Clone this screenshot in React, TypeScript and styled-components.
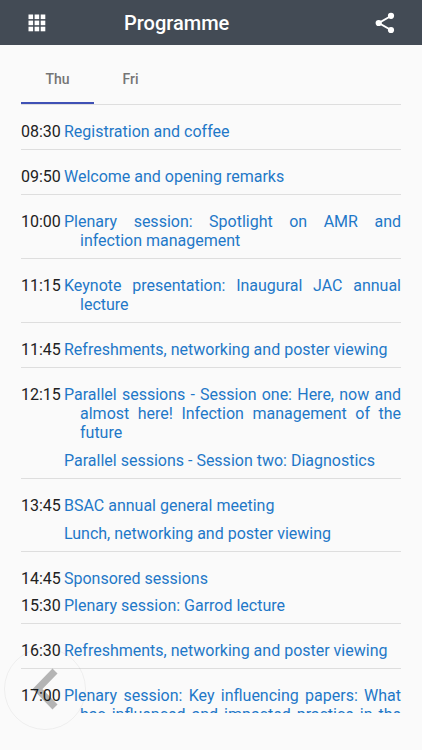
import React, { useState } from "react";
import styled, { createGlobalStyle } from "styled-components";

const GlobalStyle = createGlobalStyle`
  * { box-sizing: border-box; }
  body {
    margin: 0;
    background: #fafafa;
    color: #212121;
    font-family: Roboto, "Noto Sans", sans-serif;
    font-size: 16px;
    line-height: 19px;
  }
`;

const Screen = styled.div`
  display: flex;
  flex-direction: column;
  height: 100vh;
  padding-bottom: 37px;
`;

const AppBar = styled.header`
  display: flex;
  align-items: center;
  flex: none;
  height: 45px;
  padding: 0 25px;
  background: #434b55;
  color: #fff;
`;

const IconButton = styled.button`
  display: flex;
  padding: 0;
  border: 0;
  background: none;
  color: inherit;
  cursor: pointer;
`;

const Title = styled.h1`
  flex: 1;
  margin: 0;
  padding-left: 75px;
  font-size: 20px;
  font-weight: 500;
  line-height: 24px;
`;

const Tabs = styled.div`
  display: flex;
  flex: none;
  height: 60px;
  margin: 0 21px;
  padding-top: 11px;
  border-bottom: 1px solid #dedede;
`;

const Tab = styled.button<{ $active: boolean }>`
  width: 73px;
  padding: 0;
  border: 0;
  border-bottom: 2px solid ${(p) => (p.$active ? "#3f51b5" : "transparent")};
  background: none;
  color: #757575;
  font: 500 14px/20px Roboto, "Noto Sans", sans-serif;
  cursor: pointer;
`;

const Agenda = styled.main`
  flex: 1;
  min-height: 0;
  overflow: hidden;
  padding: 0 21px;
`;

const Block = styled.section`
  display: grid;
  row-gap: 8px;
  padding: 17px 0 8px;
  border-bottom: 1px solid #dedede;
`;

const Slot = styled.div`
  display: grid;
  grid-template-columns: 43px 1fr;
`;

const Sessions = styled.div`
  display: grid;
  row-gap: 9px;
`;

const SessionLink = styled.a`
  padding-left: 16px;
  color: #1f78c8;
  text-align: justify;
  text-decoration: none;
  text-indent: -16px;
`;

const BackButton = styled.button`
  position: fixed;
  bottom: 20px;
  left: 4px;
  width: 82px;
  height: 82px;
  padding: 0;
  border: 1px solid rgba(0, 0, 0, 0.05);
  border-radius: 50%;
  background: transparent;
  color: rgba(0, 0, 0, 0.28);
  cursor: pointer;

  svg { display: block; }
`;

type SlotData = { time: string; sessions: string[] };

const thursday: SlotData[][] = [
  [{ time: "08:30", sessions: ["Registration and coffee"] }],
  [{ time: "09:50", sessions: ["Welcome and opening remarks"] }],
  [{ time: "10:00", sessions: ["Plenary session: Spotlight on AMR and infection management"] }],
  [{ time: "11:15", sessions: ["Keynote presentation: Inaugural JAC annual lecture"] }],
  [{ time: "11:45", sessions: ["Refreshments, networking and poster viewing"] }],
  [
    {
      time: "12:15",
      sessions: [
        "Parallel sessions - Session one: Here, now and almost here! Infection management of the future",
        "Parallel sessions - Session two: Diagnostics",
      ],
    },
  ],
  [{ time: "13:45", sessions: ["BSAC annual general meeting", "Lunch, networking and poster viewing"] }],
  [
    { time: "14:45", sessions: ["Sponsored sessions"] },
    { time: "15:30", sessions: ["Plenary session: Garrod lecture"] },
  ],
  [{ time: "16:30", sessions: ["Refreshments, networking and poster viewing"] }],
  [
    {
      time: "17:00",
      sessions: ["Plenary session: Key influencing papers: What has influenced and impacted practice in the last year"],
    },
  ],
];

const days = ["Thu", "Fri"];

const GridIcon = () => (
  <svg width="24" height="24" viewBox="0 0 24 24" fill="currentColor" aria-hidden="true">
    {[3.5, 9.6, 15.7].map((y) =>
      [3.5, 9.6, 15.7].map((x) => <rect key={`${x}-${y}`} x={x} y={y} width="4.6" height="4.6" />)
    )}
  </svg>
);

const ShareIcon = () => (
  <svg width="24" height="24" viewBox="0 0 24 24" fill="currentColor" aria-hidden="true">
    <path d="M18 5 5.8 12 18 19" fill="none" stroke="currentColor" strokeWidth="2" />
    <circle cx="18" cy="4.8" r="3.1" />
    <circle cx="5.7" cy="12" r="3.1" />
    <circle cx="18" cy="19" r="3.1" />
  </svg>
);

export default function App() {
  const [day, setDay] = useState("Thu");

  return (
    <Screen>
      <GlobalStyle />
      <AppBar>
        <IconButton type="button" aria-label="Menu">
          <GridIcon />
        </IconButton>
        <Title>Programme</Title>
        <IconButton type="button" aria-label="Share">
          <ShareIcon />
        </IconButton>
      </AppBar>
      <Tabs role="tablist">
        {days.map((name) => (
          <Tab
            key={name}
            type="button"
            role="tab"
            aria-selected={day === name}
            $active={day === name}
            onClick={() => setDay(name)}
          >
            {name}
          </Tab>
        ))}
      </Tabs>
      <Agenda>
        {thursday.map((slots) => (
          <Block key={slots[0].time}>
            {slots.map((slot) => (
              <Slot key={slot.time}>
                <time>{slot.time}</time>
                <Sessions>
                  {slot.sessions.map((session) => (
                    <SessionLink key={session} href="#">
                      {session}
                    </SessionLink>
                  ))}
                </Sessions>
              </Slot>
            ))}
          </Block>
        ))}
      </Agenda>
      <BackButton type="button" aria-label="Back">
        <svg width="80" height="80" viewBox="0 0 80 80" fill="none" stroke="currentColor" strokeWidth="7" aria-hidden="true">
          <path d="M50 22 32.5 40 50 58" />
        </svg>
      </BackButton>
    </Screen>
  );
}
